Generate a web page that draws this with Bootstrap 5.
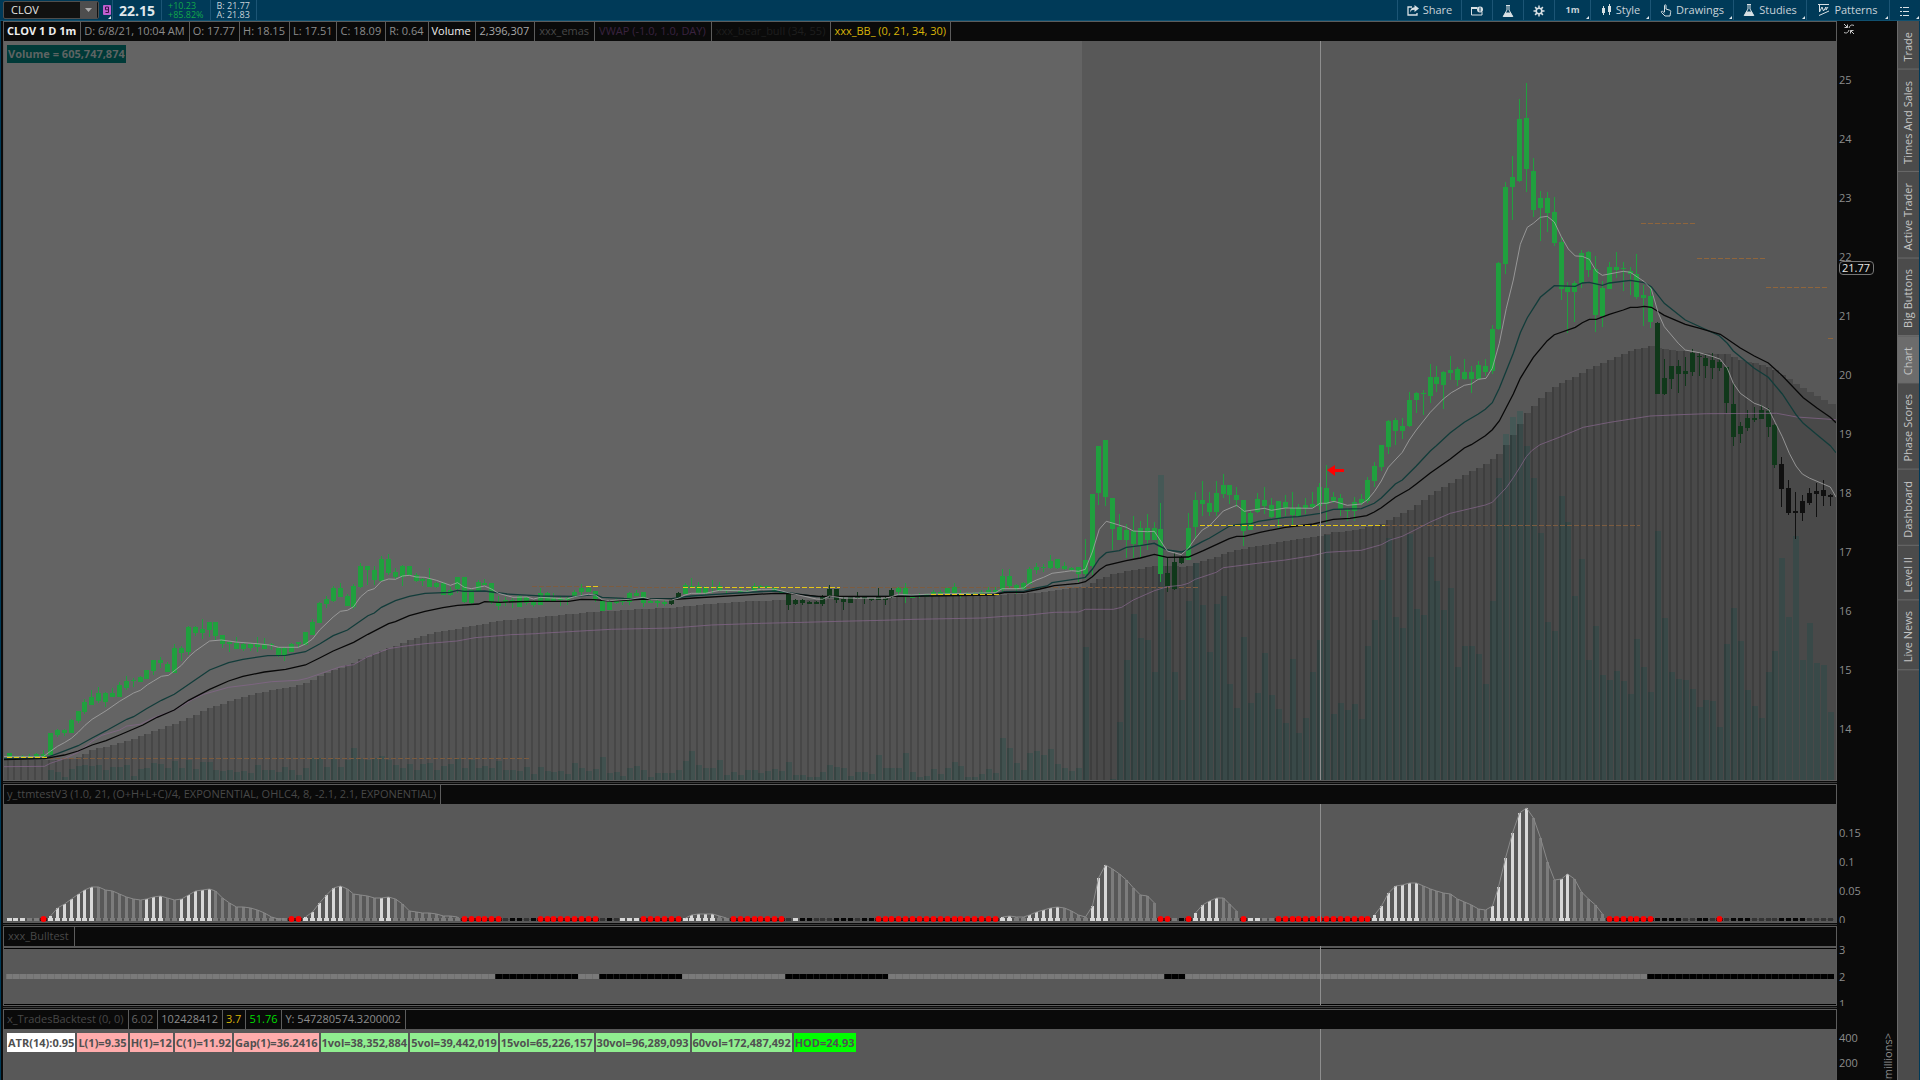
<!DOCTYPE html>
<html lang="en">
<head>
<meta charset="utf-8">
<meta name="viewport" content="width=device-width, initial-scale=1">
<title>CLOV chart</title>
<link href="https://cdn.jsdelivr.net/npm/bootstrap@5.3.0/dist/css/bootstrap.min.css" rel="stylesheet">
<style>
  :root { --edge:#5c5c5c; --ink:#0a0a0a; --bar:#003a58; --tx:#8c8c8c; }
  body { font-family:"Open Sans","Noto Sans",sans-serif; font-size:11px; line-height:16px; background:var(--ink); color:var(--tx); height:100vh; overflow:hidden; }
  .topbar { height:21px; background:var(--bar); border-bottom:1px solid #10506f; color:#c8d2d8; }
  .topbar .seg { border-right:1px solid #1c5575; height:20px; }
  .symbox { width:96px; height:18px; margin:1px 3px 0 3px; border:1px solid #4e4e4e; border-radius:2px; background:#111; }
  .symbox input { width:76px; background:none; border:0; color:#e4e4e4; padding:0 0 0 7px; font-size:11px; line-height:16px; outline:0; }
  .symbox button { width:17px; border:0; background:#4e4e4e; padding:0; }
  .flagbtn { width:10px; background:none; border:0; padding:0; position:relative; }
  .lastpx { font-size:14px; line-height:21px; font-weight:700; color:#dfe6ea; width:49px; }
  .two { font-size:9px; line-height:9px; padding:1px 6px 0; }
  .up { color:#12a64a; }
  .tool { background:none; border:0; border-left:1px solid #1c5575; color:#c8d2d8; height:20px; padding:0; font-size:11px; line-height:16px; position:relative; white-space:nowrap; }
  .corner::after { content:""; position:absolute; right:1px; bottom:1px; border-left:3px solid transparent; border-bottom:3px solid #dfe6ea; }
  .w30 { width:31px; } .w36 { width:36px; } .w59 { width:60px; } .w64 { width:64px; } .w73 { width:73px; } .w82 { width:83px; }
  .tool.tiny { font-size:9px; font-weight:700; }
  .leftedge { width:3px; border-left:1px solid var(--bar); background:var(--ink); }
  .paneview { border:1px solid var(--edge); }
  .headrow { height:19px; background:var(--ink); line-height:18px; white-space:nowrap; overflow:hidden; }
  .headrow span { border-right:1px solid var(--edge); padding:0 4px 0 3px; }
  .headrow .roomy { padding:0 5px 0 4px; }
  .plot { background:#585858; min-height:0; overflow:hidden; }
  .plot svg { display:block; width:100%; height:100%; }
  .p1 { min-height:0; } .p2 { height:139px; } .p3 { height:80px; } .p4 { height:71px; }
  .splitter { height:3px; border-top:1px solid var(--ink); border-bottom:1px solid var(--ink); background:#3a3a3a; margin-right:60px; }
  .axis { width:60px; padding-left:2px; overflow:hidden; }
  .axis div { flex:none; }
  .a1 { padding-top:29px; line-height:59px; } .a2 { padding-top:34px; line-height:29px; }
  .a3 { padding-top:10px; line-height:27px; } .a4 { padding-top:16px; line-height:25px; }
  .lasttag { position:absolute; left:2px; top:240px; line-height:12px; padding:0 3px 0 2px; border:1px solid #777; border-radius:4px; background:var(--ink); color:#e8e8e8; }
  .collapse-ic { position:absolute; left:6px; top:2px; background:none; border:0; padding:0; line-height:0; }
  .vollabel { position:absolute; left:3px; top:4px; background:#003a38; color:#5e6463; font-weight:700; padding:0 1px; line-height:18px; }
  .tags { padding:4px 3px; gap:2px; line-height:19px; font-weight:700; color:#505050; white-space:nowrap; }
  .tags span { padding:0 1px; }
  .tw { background:#fff; } .tp { background:#ffacac; } .tg { background:#90ee90; } .th { background:#0f0; }
  .unit { position:absolute; right:1px; top:24px; line-height:16px; writing-mode:vertical-rl; transform:rotate(180deg); white-space:nowrap; }
  .sidetabs { width:23px; background:#4b4b4b; border-left:1px solid #6a6a6a; border-right:1px solid var(--bar); }
  .sidetabs button { writing-mode:vertical-rl; transform:rotate(180deg); background:none; color:#c4c4c4; border:0; border-top:1px solid #6a6a6a; padding:7px 0 11px 1px; line-height:20px; width:21px; font-size:11px; white-space:nowrap; }
  .sidetabs button.on { background:#6c6c6c; }
  .dim { color:#484848; } .vw { color:#3a2340; } .bear { color:#1e1e1e; } .yel { color:#d8b408; } .lit { color:#eee; } .grn { color:#0d0; } .soft { color:#a8a8a8; } .mute { color:#666; }
</style>
<script src="https://cdn.jsdelivr.net/npm/bootstrap@5.3.0/dist/js/bootstrap.bundle.min.js"></script>
</head>
<body class="d-flex flex-column">
<header class="topbar d-flex flex-shrink-0">
  <div class="symbox d-flex"><input type="text" value="CLOV" aria-label="Symbol"><button type="button" aria-label="Symbol list" class="d-flex align-items-center justify-content-center"><svg width="7" height="4"><path d="M0 0h7L3.500 4z" fill="#aaa"/></svg></button></div>
  <div class="seg d-flex"><button type="button" class="flagbtn corner" aria-label="Link colour"><svg width="8" height="11" class="d-block mx-auto"><rect width="8" height="10" rx="1" fill="#c05fd0"/><path d="M2.500 2h3v5.500h-3M5.500 4.800h-3V2" fill="none" stroke="#3b1145"/></svg></button></div>
  <div class="seg lastpx text-center">22.15</div>
  <div class="seg two up">+10.23<br>+85.82%</div>
  <div class="seg two">B: 21.77<br>A: 21.83</div>
  <nav class="ms-auto d-flex" aria-label="Chart tools">
    <button type="button" class="tool w64 d-flex align-items-center justify-content-center gap-1"><svg width="12" height="11" fill="none" stroke="#d8e0e4" stroke-width="1.300"><path d="M5 2H1v8h9V8"/><path d="M7.500 0l4.500 3.500L7.500 7V4.800C5 4.800 4 5.500 3 7.500 3 4.500 4.500 2.500 7.500 2.300z" fill="#d8e0e4" stroke="none"/></svg>Share</button>
    <button type="button" class="tool w30" aria-label="Detach"><svg width="12" height="10"><path d="M.5 1.500h6M.5 1v8h10.500V6" fill="none" stroke="#d8e0e4"/><path d="M0 1h6v2H0z" fill="#d8e0e4"/><circle cx="9" cy="3.500" r="3" fill="#d8e0e4"/><path d="M9 1.500V5.500" stroke="#003a58"/></svg></button>
    <button type="button" class="tool w30" aria-label="Edit studies"><svg width="12" height="13"><path d="M4 .5h4M5 1v4L1.200 11.500h9.600L7 5V1" fill="none" stroke="#d8e0e4"/><path d="M3.500 7.500h5l2.300 4H1.200z" fill="#d8e0e4"/></svg></button>
    <button type="button" class="tool w30" aria-label="Settings"><svg width="12" height="12" viewBox="-6 -6 12 12" stroke="#d8e0e4"><circle r="2.800" fill="none" stroke-width="1.600"/><path d="M0-5.500V-3M0 5.500V3M-5.500 0H-3M5.500 0H3M-3.900-3.900l1.800 1.800M3.900 3.900L2.100 2.100M-3.900 3.900l1.800-1.800M3.900-3.900L2.100-2.100" stroke-width="1.500"/></svg></button>
    <button type="button" class="tool w36 tiny corner">1m</button>
    <button type="button" class="tool w59 corner d-flex align-items-center justify-content-center gap-1"><svg width="11" height="12" fill="#d8e0e4"><path d="M1 4h3v5H1zM2 2h1v9H2z"/><path d="M7 2h3v6H7zM8 0h1v11H8z"/></svg>Style</button>
    <button type="button" class="tool w82 corner d-flex align-items-center justify-content-center gap-1"><svg width="12" height="13" fill="none" stroke="#d8e0e4"><path d="M4.500 8V1.500c0-1 1.500-1 1.500 0V5l4 1.300c.8.300.8 1 .6 2L10 12H5L1.500 8.500C.8 7.500 2 6.800 2.700 7.400L4.500 9"/></svg>Drawings</button>
    <button type="button" class="tool w73 corner d-flex align-items-center justify-content-center gap-1"><svg width="12" height="13"><path d="M4 .5h4M5 1v4L1.200 11.500h9.600L7 5V1" fill="none" stroke="#d8e0e4"/><path d="M3.500 7.500h5l2.300 4H1.200z" fill="#d8e0e4"/></svg>Studies</button>
    <button type="button" class="tool w82 corner d-flex align-items-center justify-content-center gap-1"><svg width="12" height="12" fill="none" stroke="#d8e0e4"><path d="M0 .5h11M1.500 1v7L4 3l1.500 4L8 3v3l2-3M1 11.500L11 7"/></svg>Patterns</button>
    <button type="button" class="tool w30 corner" aria-label="Menu"><svg width="10" height="9" stroke="#d8e0e4"><path d="M0 .5h2M3 .5h6M0 4.500h2M3 4.500h6M0 8.500h2M3 8.500h6"/></svg></button>
  </nav>
</header>
<main class="d-flex flex-grow-1 overflow-hidden">
  <div class="leftedge"></div>
  <div class="d-flex flex-column flex-grow-1">
    <section class="p1 d-flex flex-grow-1">
      <div class="paneview d-flex flex-column flex-grow-1">
        <div class="headrow d-flex"><span class="lit fw-bold">CLOV 1 D 1m</span><span>D: 6/8/21, 10:04 AM</span><span>O: 17.77</span><span>H: 18.15</span><span>L: 17.51</span><span>C: 18.09</span><span>R: 0.64</span><span class="lit">Volume</span><span class="soft roomy">2,396,307</span><span class="dim roomy">xxx_emas</span><span class="vw roomy">VWAP (-1.0, 1.0, DAY)</span><span class="bear roomy">xxx_bear_bull (34, 55)</span><span class="yel">xxx_BB_ (0, 21, 34, 30)</span></div>
        <div class="plot flex-grow-1 position-relative"><svg id="price" viewBox="4 41 1832 739" preserveAspectRatio="none" role="img" aria-label="CLOV candles"></svg><div class="vollabel">Volume = 605,747,874</div></div>
      </div>
      <div class="axis a1 d-flex flex-column position-relative"><div>25</div><div>24</div><div>23</div><div>22</div><div>21</div><div>20</div><div>19</div><div>18</div><div>17</div><div>16</div><div>15</div><div>14</div>
        <span class="lasttag">21.77</span>
        <button type="button" class="collapse-ic" aria-label="Collapse"><svg width="12" height="12" fill="none" stroke="#c8c8c8"><path d="M1 1l3.500 3.500M1.500 4.500h3V1.500M11 11L7.500 7.500M10.500 7.500h-3v3M6 5C7 2 8.500 1.500 11 2.500M6 7C5 10 3.500 10.500 1 9.500"/></svg></button></div>
    </section>
    <div class="splitter"></div>
    <section class="p2 d-flex flex-shrink-0">
      <div class="paneview d-flex flex-column flex-grow-1">
        <div class="headrow d-flex"><span class="dim">y_ttmtestV3 (1.0, 21, (O+H+L+C)/4, EXPONENTIAL, OHLC4, 8, -2.1, 2.1, EXPONENTIAL)</span></div>
        <div class="plot flex-grow-1"><svg id="ttm" viewBox="4 804 1832 118" preserveAspectRatio="none" role="img" aria-label="TTM histogram"></svg></div>
      </div>
      <div class="axis a2 d-flex flex-column"><div>0.15</div><div>0.1</div><div>0.05</div><div>0</div></div>
    </section>
    <div class="splitter"></div>
    <section class="p3 d-flex flex-shrink-0">
      <div class="paneview d-flex flex-column flex-grow-1">
        <div class="headrow d-flex"><span class="dim roomy">xxx_Bulltest</span></div>
        <div class="plot flex-grow-1"><svg id="bull" viewBox="4 946 1832 59" preserveAspectRatio="none" role="img" aria-label="Bull test band"></svg></div>
      </div>
      <div class="axis a3 d-flex flex-column"><div>3</div><div>2</div><div>1</div></div>
    </section>
    <div class="splitter"></div>
    <section class="p4 d-flex flex-shrink-0">
      <div class="paneview border-bottom-0 d-flex flex-column flex-grow-1">
        <div class="headrow d-flex"><span class="dim">x_TradesBacktest (0, 0)</span><span class="mute">6.02</span><span>102428412</span><span class="yel">3.7</span><span class="grn">51.76</span><span>Y: 547280574.3200002</span></div>
        <div class="plot flex-grow-1 position-relative"><svg id="trades" class="position-absolute" viewBox="4 1029 1832 51" preserveAspectRatio="none" aria-hidden="true"></svg>
          <div class="tags d-flex position-relative"><span class="tw">ATR(14):0.95</span><span class="tp">L(1)=9.35</span><span class="tp">H(1)=12</span><span class="tp">C(1)=11.92</span><span class="tp">Gap(1)=36.2416</span><span class="tg">1vol=38,352,884</span><span class="tg">5vol=39,442,019</span><span class="tg">15vol=65,226,157</span><span class="tg">30vol=96,289,093</span><span class="tg">60vol=172,487,492</span><span class="th">HOD=24.93</span></div></div>
      </div>
      <div class="axis a4 d-flex flex-column position-relative"><div>400</div><div>200</div><span class="unit">&lt;millions&gt;</span></div>
    </section>
  </div>
  <nav class="sidetabs d-flex flex-column flex-shrink-0" aria-label="Side panels">
    <button type="button">Trade</button><button type="button">Times And Sales</button><button type="button">Active Trader</button><button type="button">Big Buttons</button><button type="button" class="on">Chart</button><button type="button">Phase Scores</button><button type="button">Dashboard</button><button type="button">Level II</button><button type="button">Live News</button>
  </nav>
</main>
<script>
(() => {
const N = 265, CROSS = 1320;
/* bars step by 7, with one step in about ten shortened to 6 */
const left = i => 7 + 7 * i - Math.floor(i / 9.8 + .975);
const mid = i => left(i) + 2.5;
const rect = (x, y, w, h, f) => `<rect x="${x}" y="${y}" width="${w}" height="${h}" fill="${f}"/>`;
const put = (id, s) => document.getElementById(id).innerHTML = s;
/* Readings are kept in thirds of a unit below a base line. */
const third = (base, v) => base + v / 3;

/* volume tops */
const vol = [];
const addVol = (start, base, list) => list.forEach((v, k) => vol[start + k] = third(base, v));
addVol(6, 540, [690,697,712,687,677,674,678,675,689,681,681,675,708,686,683,670,672,685,663,684,659,686,665,667,690,692,691,695,693,700,674,689,691,696,681,689,706,684,655,655,680,657,682,660,625,658,660,655,648,660,676,685,672,690,673,668,690,679,673,658,683,659,684,679,684,662,690,690,694,680,702]);
addVol(77, 540, [682,694,696,694,703,670,685,693,688,651,699,696,708,683,678,690,710,699,699,700,690,664,632,675,685,683,660,706,697,706,690,689,698,693,687,693,665,705,706,712,712,695,675,682,685,708,697,697,702,646,684,683,684,639,697,710,707,688,703,683,667,678,710,710,702,687,698,593,625,670,691,638,634,646,627,672,685,694,684,321]);
addVol(160, 400, [1138,966,780,643,714,720,816,225,660,816,900,603,489,615,756,612,588,852,924,711,909,879,759,885,927,969,777,999,954,816,720,405,942,909,930,912,957,738,660,540,414,651,684,402,627,645,471,543,630,564,801,738,738,762,852,603,234,102,51,33,138,234,399,666,693,288,366,588,477,780,678,825,840,813,843,882,717,801,876,393,654,816,837,840,867,921,900,903,981,732,624,723,870,918,954,816,753,474,651,408,780,669,789,795,936]);

/* candles: high, body top, body bottom, low */
const can = [];
const addCan = (start, base, s) => s.trim().split(/\s+/).forEach((c, k) => can[start + k] = c.split(',').map(v => Math.round(third(base, +v))));
addCan(0, 540, `639,639,650,650 648,648,652,652 645,648,652,652 641,647,652,652 639,642,652,652 630,642,650,652 578,578,645,645 568,570,585,591 568,570,579,588 538,540,579,579 513,513,543,550 477,486,516,522 451,471,495,495 441,459,483,490 456,459,486,501 444,459,471,471 426,435,471,471 409,423,444,451 414,420,423,441 407,411,426,426 390,390,417,417 360,360,393,405 351,360,369,384 365,372,396,396 313,323,399,399 317,323,338,362 257,261,336,344 257,261,279,287 237,267,279,297 246,246,270,291 246,246,288,301 285,285,311,325 302,306,311,335 292,309,327,327 309,312,327,333 309,312,324,332 292,312,321,336 293,312,327,327 310,313,315,331 320,323,345,350 322,323,345,364 309,312,335,335 307,307,313,325 275,276,315,315 238,246,285,285 185,189,248,248 168,177,192,204 138,144,183,186 130,144,171,171 161,168,198,198 131,138,200,207 70,78,141,144 78,78,90,136 77,90,120,136 47,57,123,123 42,57,99,106 84,96,111,117 74,78,111,137 78,78,105,105 98,105,123,126 115,118,123,139 83,116,140,140 126,129,141,145 126,129,165,165 141,150,165,168 111,111,147,160 110,111,186,189 147,150,189,192 120,126,153,153 116,129,136,136 129,129,186,192 168,186,197,211 171,180,186,197 174,180,186,203 165,168,200,200 170,170,189,195 180,186,195,202`);
addCan(77, 540, `144,159,195,195 155,159,183,183 160,175,182,182 168,174,180,199 170,174,180,195 150,156,168,168 132,144,156,165 140,144,155,155 152,153,177,185 180,183,213,213 183,185,211,211 177,183,189,191 177,183,186,195 156,159,186,195 150,159,168,168 155,156,189,200 178,182,189,190 180,183,189,200 180,185,191,198 177,180,192,195 156,158,174,177 128,135,162,162 115,138,143,143 126,139,159,163 138,141,159,165 121,140,144,160 127,138,153,153 150,151,153,161 150,150,153,153 144,153,159,159 150,152,160,160 130,138,153,153 136,138,144,144 137,138,144,144 142,144,153,153 153,156,160,160 156,157,195,209 177,180,192,194 178,180,189,195 182,185,191,192 183,185,191,192 166,170,191,198 135,147,168,174 146,147,180,190 171,177,186,211 170,172,188,190 157,170,173,178 168,172,178,191 173,175,180,182 145,170,180,180 170,175,180,194 145,150,170,174 141,143,155,165 129,143,165,190 165,167,173,173 160,167,171,173 161,163,171,171 150,155,163,163 150,155,163,163 143,144,163,163 130,141,160,165 150,158,165,175 155,158,163,163 155,158,163,163 150,155,163,163 140,150,160,163 140,149,155,160 88,107,150,155 88,107,138,145 132,135,147,163 126,129,147,150 80,87,132,132 70,81,90,103 71,80,83,95 44,63,84,88 57,57,84,88 65,78,88,90 80,83,91,93 80,81,102,125`);
addCan(156, 400, `418,480,521,538 282,282,498,525 138,138,279,316 120,120,291,319 294,294,387,450 343,381,420,420 372,390,420,475 349,393,432,475 364,384,435,472 343,384,420,451 366,384,420,420 310,387,522,545 470,519,558,575 460,486,566,571 468,471,489,491 340,384,480,480 277,300,381,417 244,300,312,349 277,309,336,348 244,279,336,348 223,255,282,295 255,255,285,312 262,285,300,322 300,300,393,439 333,339,390,391 280,297,336,340 262,300,318,343 295,315,351,355 303,303,354,384 286,306,324,348 277,324,345,376 312,321,348,350 295,315,325,343 277,312,321,324 250,261,318,330 195,264,312,370 277,291,303,310 283,294,327,348 325,330,333,364 292,306,333,363 283,297,309,315 232,240,303,310 187,198,243,262 135,135,201,214 60,63,141,163 55,60,93,136 55,78,93,118`);
addCan(203, 60, `997,1020,1098,1100 995,999,1020,1060 990,998,1001,1066 913,951,1008,1030 919,951,972,997 933,936,975,1048 889,930,939,961 921,927,960,978 898,936,957,961 919,936,957,999 904,915,957,960 898,918,936,948 796,807,933,942 606,609,807,811 367,381,612,643 289,351,381,481 118,177,363,367 70,174,327,397 295,333,450,472 394,414,444,544 397,414,459,517 412,456,549,559 530,546,687,721 667,680,696,819 663,669,696,787 571,579,669,685 574,576,630,652 589,627,765,817 664,684,768,802 607,621,687,687 577,621,630,655 607,624,627,694 622,633,642,706 583,642,711,717 676,705,714,799 680,708,786,804 786,789,1002,1003 898,954,1002,1006 918,918,957,987 901,918,942,999 892,933,942,979 868,880,936,948 880,888,891,948 886,894,918,955 880,900,924,958 898,906,924,933 921,921,1029,1060 970,1032,1131,1158 1087,1098,1122,1150 1050,1074,1104,1113 1042,1074,1080,1087 1036,1050,1077,1077 1045,1053,1101,1132`);
addCan(256, 400, `72,75,195,205 172,192,267,320 241,264,339,344 277,333,339,418 286,303,339,364 265,279,309,314 250,273,282,352 240,270,288,317 282,285,291,317`);

/* curves: each run has its own origin and horizontal scale */
const A = [0, 540, 2.8], B = [540, 540, 2.8], C = [1060, 400, 3], D = [1400, 60, 3], E = [1450, 400, 3];
const curve = runs => runs.flatMap(([o, s]) => s.trim().split(/\s+/).map(p => { const [x, y] = p.split(','); return [o[0] + x / o[2], o[1] + y / 3]; }));
const fast = curve([[A,`10,650 121,650 141,634 161,619 180,608 200,595 219,577 238,556 258,538 297,512 335,484 374,459 393,451 413,434 430,423 452,409 472,406 508,376 528,351 547,333 587,303 620,300 660,306 720,311 755,315 780,322 835,322 855,312 875,297 895,270 933,231 953,214 973,211 990,200 1009,171 1030,152 1048,146 1068,124 1088,117 1107,118 1127,108 1146,106 1165,111 1190,112 1222,121 1261,136 1281,128 1300,142 1320,146 1357,138 1376,147 1396,160 1436,172 1475,171 1494,177 1514,172 1555,175`],[B,`75,177 96,170 136,163 155,165 174,179 194,182 250,178 289,172 309,178 368,180 387,175 406,165 424,160 463,160 503,151 561,152 580,154 620,148 657,148 677,153 696,158 774,177 791,178 810,168 850,174 908,175 967,175 984,170 1004,163 1040,165 1081,163 1275,158 1294,146 1334,146 1354,144 1371,130 1390,120 1410,112 1434,100 1469,95 1488,92 1508,94 1527,88`],[C,`76,508 97,456 118,388 139,364 157,369 199,382 220,393 262,395 283,394 322,453 364,464 385,445 406,415 427,390 448,378 490,333 530,316 553,334 613,325 634,331 676,324 757,325 780,310 799,310 822,304 862,316 904,312 922,300 943,275 964,243 985,202 1027,157`],[D,`28,1140 49,1110 91,1057 130,1017 154,998 193,976 214,972 235,958 258,955 277,925 298,850 319,745 340,660 361,553 382,502 400,490 421,472 442,469 463,486 484,530 505,567 526,588 547,589 568,598 589,634 607,646 670,634 691,637 733,665 754,687 775,760 793,800 835,850 856,870 898,878 940,890 961,898 982,925 1000,970 1021,1000 1063,1030 1084,1037 1107,1050 1126,1088 1147,1130`],[E,`1018,160 1038,198 1057,222 1078,234 1120,252 1141,261 1158,291`]]);
const teal = curve([[A,`10,655 125,655 170,637 219,617 258,594 297,572 355,538 374,530 410,506 452,481 488,463 547,419 587,390 640,368 680,358 750,347 800,346 855,335 895,312 933,287 973,270 1030,227 1048,219 1068,202 1107,182 1146,169 1190,160 1260,157 1281,151 1300,154 1357,153 1420,162 1500,167`],[B,`0,168 100,169 155,164 174,172 235,175 368,176 424,168 480,164 600,156 657,153 696,158 774,170 850,170 984,169 1275,162 1300,155 1354,154 1390,144 1420,138 1434,128 1508,116`],[C,`76,532 97,508 118,476 139,458 178,452 199,442 241,437 283,430 322,450 364,456 385,448 427,425 448,415 508,379 530,374 574,371 595,364 676,352 715,350 780,340 820,328 904,326 943,310 964,294 1006,252 1027,240 1069,198 1111,153 1129,137 1171,98 1213,67`],[D,`235,1062 256,1048 277,1028 298,985 340,880 361,818 382,773 421,712 463,677 526,679 547,669 568,667 607,676 628,669 691,661 733,668 754,680 793,730 856,780 958,827 982,850 1000,873 1063,925 1105,952 1147,1002 1189,1065 1210,1090 1252,1125 1291,1157 1308,1178`]]);
const slow = curve([[A,`10,659 125,656 180,645 219,633 258,615 297,602 335,585 400,555 440,532 488,510 528,481 587,448 640,423 680,409 740,396 800,388 855,375 895,354 933,333 990,307 1030,283 1088,251 1107,245 1146,227 1190,214 1240,203 1281,196 1340,192 1357,185 1400,187 1480,184`],[B,`0,184 80,184 116,178 150,179 200,183 280,178 380,178 430,174 560,166 660,160 700,161 780,169 1040,169 1270,165 1300,158 1354,157 1400,147 1440,137 1508,130`],[C,`76,545 97,530 118,510 139,496 199,482 241,474 283,463 322,472 385,471 430,452 508,416 530,409 553,409 600,397 676,382 760,372 820,358 870,355 920,347 943,336 964,323 1006,292 1048,268 1069,252 1111,219 1171,177 1213,144 1234,134 1276,107`],[D,`277,1109 298,1083 340,1002 361,955 400,892 442,842 463,824 526,802 547,788 568,778 589,778 628,763 670,750 691,742 712,742 733,739 754,742 793,766 856,793 900,805 961,823 1021,864 1063,888 1105,909 1147,947 1210,1013 1252,1045 1291,1072 1308,1088`]]);
const vwap = curve([[A,`10,680 125,679 141,670 180,656 219,637 258,604 285,586 335,570 355,558 393,553 430,533 488,511 540,478 570,463 640,442 700,434 760,425 835,421 860,415 895,402 953,380 990,374 1030,350 1088,326 1130,319 1190,311 1280,303 1330,293 1430,284 1500,281`],[B,`0,280 80,275 200,268 370,264 480,255 620,250 740,247 840,244 960,241 1050,238 1240,234 1300,229 1360,226 1440,217 1508,216`],[C,`76,628 160,628 185,622 220,600 283,572 322,560 364,556 385,550 406,538 469,517 490,503 592,490 676,480 757,467 800,457 904,451 964,434 990,420 1027,409 1069,388 1111,366 1171,340 1213,330 1276,315 1297,307 1318,285 1339,263 1360,233 1381,200 1399,170`],[E,`245,152 270,134 330,111 400,82 480,67 600,48 690,44 770,41 980,40 1040,51 1140,58 1158,59`]]);
const cloud = curve([[A,`10,661 210,658 258,630 297,620 355,603 374,597 430,573 488,551 530,533 587,504 640,485 700,466 760,450 820,439 855,430 895,408 933,391 990,369 1009,358 1068,334 1107,317 1146,299 1222,277 1300,262 1400,242 1480,234`],[B,`0,231 50,226 130,217 240,210 380,202 500,189 620,182 780,179 1000,172 1280,165 1380,160 1440,150 1500,141`],[C,`76,560 118,537 157,522 220,510 283,498 375,500 427,483 469,470 530,450 600,436 760,411 820,397 900,388 964,372 1048,330 1111,285 1171,249 1213,225 1276,192 1297,178 1318,160 1339,130 1360,102`],[D,`379,1060 400,1040 421,1015 463,980 505,960 568,925 607,910 691,873 751,858 780,865 877,877 979,883 1021,900 1105,920 1147,945 1189,975 1270,1020 1308,1040 1320,1046`]]);
const at = (c, x) => { for (let k = 1; k < c.length; k++) if (c[k][0] >= x) { const [a, b] = [c[k - 1], c[k]]; return a[1] + (b[1] - a[1]) * Math.max(0, (x - a[0]) / (b[0] - a[0])); } return c[c.length - 1][1]; };
const line = (c, col, w, extra = '') => `<polyline points="${c.map(p => p[0].toFixed(1) + ',' + p[1].toFixed(1)).join(' ')}" fill="none" stroke="${col}" stroke-width="${w}" ${extra}/>`;
const dash = (x1, x2, y, col) => `<path d="M${x1} ${y}.5H${x2}" stroke="${col}" stroke-dasharray="5 2"/>`;
const cross = (y1, y2) => rect(CROSS, y1, 1, y2 - y1, '#8e8e8e');

let s = rect(4, 41, 1078, 739, '#646464');
for (let i = 0; i < N; i++) if (vol[i] && vol[i] < 780) s += rect(left(i), Math.round(vol[i]), 6, 780 - Math.round(vol[i]), 'rgba(20,88,82,.28)');
let stripes = '', path = 'M4 780';
for (let i = 0; i < N; i++) {
  const y = Math.round(at(cloud, mid(i))), x = left(i);
  path += `L${i ? x : 4} ${y}H${i < N - 1 ? left(i + 1) : 1836}`;
  if (i < 257) stripes += rect(x, y, 2, 780 - y, 'rgba(0,0,0,.14)');
}
s += `<path d="${path}V780z" fill="rgba(0,0,0,.16)"/>` + stripes;
[[48,530,758],[532,632,586],[633,1198,587],[1385,1640,525]].forEach(d => s += dash(...d, '#7c5c40'));
[[1641,1696,223],[1697,1765,258],[1766,1827,287],[1828,1834,338]].forEach(d => s += dash(...d, '#8f653c'));
const dark = i => i === 96 || i === 97 || (i >= 113 && i <= 128) || (i >= 168 && i <= 170) || (i >= 239 && i <= 256);
can.forEach(([h, t, b, l], i) => {
  const f = i > 256 ? '#101010' : dark(i) ? '#10381a' : '#20a03e', x = left(i);
  s += rect(x + 2, h, 1, Math.max(1, l - h), f) + rect(x, t, 5, Math.max(1, b - t), f);
});
s += line(vwap, '#84668a', 1, 'stroke-opacity=".75"') + line(teal, '#123c3a', 1.3) + line(slow, '#080808', 1.3) + line(fast, '#a6a6a6', 1, 'stroke-opacity=".8"');
[[7,47,757],[586,599,586],[683,840,587],[931,1000,594],[1200,1385,525]].forEach(d => s += dash(...d, '#e6c619'));
s += cross(41, 780) + '<path d="M1327 470l8-5v4h9v3h-9v4z" fill="#f00"/>';
put('price', s);

/* histogram: start index, tone (w rising, g falling), tops */
let h = '', dots = '', env = [];
const tone = { w: '#d8d8d8', g: '#7c7c7c', d: '#333', k: '#050505' };
const foot = (i, t) => rect(left(i), 918, 5, 3, tone[t]);
const flush = () => { if (env.length > 1) h += line(env, '#8a8a8a', 1); env = []; };
const hump = (start, str) => { env = []; str.split(' ').forEach((q, k) => { const i = start + k, y = Math.round(third(780, +q.slice(1))), t = q[0]; h += rect(left(i) + 1, y, 3, Math.max(1, 921 - y), tone[t]) + foot(i, t); env.push([mid(i), y]); }); flush(); };
h += rect(6, 919, 1828, 1, '#4c4c4c');
hump(6, 'w408 w384 w372 w357 w342 w330 w321 g322 g331 g334 g343 g352 g358 g361 w357 w351 w348 g355 g361 w357 w345 w333 w330 w327 g334 g354 g370 g382 g382 g385 g390 g400 g412 g417 g417');
hump(43, 'w411 w396 w369 w345 w324 w318 g328 g343 g345 g348 g354 w353 w351 g357 g373 g394 g397 g400 g400 g403 g408 g408 g412');
hump(98, 'w414 w405 w402 w402 w402 g408 g413');
hump(144, 'w411 w408 g410 g412 w405 w396 w390 w384 w381 g384 g393 g405 g411 w378 w294 w255 g266 g282 g300 g325 g345 g348 g370');
hump(172, 'w400 w375 w363 w354 g354 g373 g393');
hump(198, 'w405 w378 w340 w318 w315 w309 w309 g319 g328 g334 g340 g343 g357 g366 g376 g388 g391 w378 w321 w234 w159 w99 w84 g114 g174 g246 g300 w297 w282 g297 g337 g358 g375 g403');
const feet = (start, str) => [...str].forEach((t, k) => h += foot(start + k, t));
feet(0, 'wwwgg'); feet(72, 'dkkdk'); feet(86, 'dkdwww'); feet(113, 'dwkkdddkkkdkk'); feet(169, 'gk'); feet(180, 'wwgg'); feet(239, 'kkkkddkkd'); feet(249, 'dkkkddddkkkkdddd');
[[5,5],[41,42],[66,71],[77,85],[92,97],[105,112],[126,143],[167,168],[171,171],[179,179],[184,197],[232,238],[248,248]].forEach(([a, b]) => { for (let i = a; i <= b; i++) dots += rect(left(i) - 1, 918, 7, 3, '#101010') + `<ellipse cx="${mid(i)}" cy="919" rx="3" ry="3" fill="#f00"/>`; });
put('ttm', h + dots + cross(804, 922));

let b = rect(4, 948, 1832, 1, '#000') + rect(4, 1004, 1832, 1, '#000');
for (let i = 0; i < N; i++) {
  const k = (i >= 71 && i <= 82) || (i >= 86 && i <= 97) || (i >= 113 && i <= 127) || (i >= 168 && i <= 170) || i >= 238;
  b += rect(left(i) - 1, 974, 7, 5, k ? '#1c1c1c' : '#707070') + rect(left(i), 974, 6, 5, k ? '#000' : '#7a7a7a');
}
put('bull', b + cross(946, 1005));
put('trades', cross(1029, 1080));
})();
</script>
</body>
</html>
